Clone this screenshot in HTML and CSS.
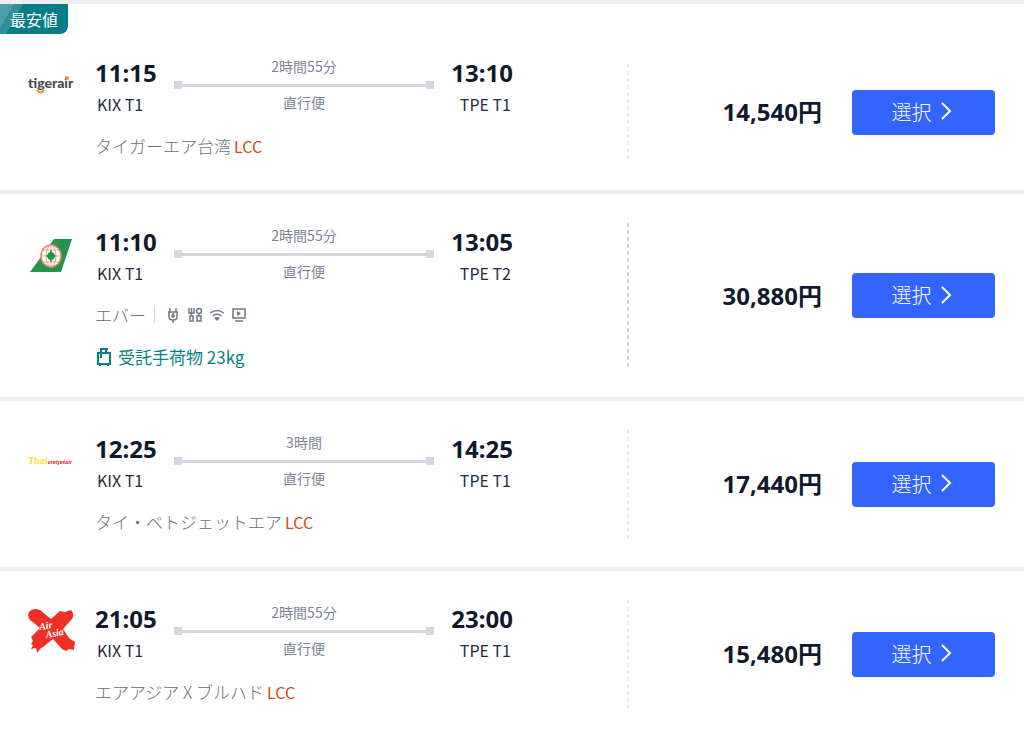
FILE: index.html
```html
<!DOCTYPE html>
<html lang="ja">
<head>
    <meta charset="UTF-8">
    <meta name="viewport" content="width=device-width, initial-scale=1.0">
    <title>航空券 検索結果</title>
    <link rel="stylesheet" href="styles.css">
</head>
<body>
    <ul class="flights">

        <!-- タイガーエア台湾 -->
        <li class="flight cheapest">
            <span class="badge">最安値</span>
            <div class="itinerary">
                <svg class="logo" viewBox="0 0 48 48" role="img" aria-label="tigerair">
                    <text x="0" y="27" class="tiger-text">tigerair</text>
                    <path d="M9 29q4 5 7 0" fill="none" stroke="#f39325" stroke-width="2"/>
                    <circle cx="39" cy="17" r="2" fill="#f39325"/>
                </svg>
                <div class="detail">
                    <div class="route">
                        <div class="stop">
                            <time class="time">11:15</time>
                            <span class="airport">KIX T1</span>
                        </div>
                        <div class="track">
                            <span>2時間55分</span>
                            <div class="line"></div>
                            <span>直行便</span>
                        </div>
                        <div class="stop arrival">
                            <time class="time">13:10</time>
                            <span class="airport">TPE T1</span>
                        </div>
                    </div>
                    <div class="airline">タイガーエア台湾 <span class="lcc">LCC</span></div>
                </div>
            </div>
            <div class="booking">
                <strong class="price">14,540円</strong>
                <button class="select" type="button">選択
                    <svg class="arrow" viewBox="0 0 12 18"><path d="M2 1l8 8-8 8"/></svg>
                </button>
            </div>
        </li>

        <!-- エバー -->
        <li class="flight">
            <div class="itinerary">
                <svg class="logo" viewBox="0 0 48 48" role="img" aria-label="EVA AIR">
                    <path d="M26 9h18L33 42H2z" fill="#239448"/>
                    <ellipse cx="23" cy="26" rx="10" ry="11" fill="#fff" stroke="#dc8a62" stroke-width="1.500"/>
                    <g fill="none" stroke="#e3a888" stroke-width="1">
                        <ellipse cx="23" cy="26" rx="5" ry="11"/>
                        <path d="M13 26h20M15 20h16M15 32h16M23 15v22"/>
                    </g>
                    <path d="M23 20l2 3 3 3-3 3-2 3-2-3-3-3 3-3z" fill="#239448"/>
                    <path d="M20 23h6v6h-6z" fill="#239448"/>
                </svg>
                <div class="detail">
                    <div class="route">
                        <div class="stop">
                            <time class="time">11:10</time>
                            <span class="airport">KIX T1</span>
                        </div>
                        <div class="track">
                            <span>2時間55分</span>
                            <div class="line"></div>
                            <span>直行便</span>
                        </div>
                        <div class="stop arrival">
                            <time class="time">13:05</time>
                            <span class="airport">TPE T2</span>
                        </div>
                    </div>
                    <div class="airline">エバー
                        <span class="amenities">
                            <!-- 電源 -->
                            <svg viewBox="0 0 16 16"><path d="M5 1v4M11 1v4M3 5h10M4 5v5q0 3 4 3t4-3V5M8 13v3"/><path d="M9 6l-2 3h2l-1 2"/></svg>
                            <!-- 機内食 -->
                            <svg viewBox="0 0 16 16"><path d="M2 1v5h5V1M4.500 1v8M3 9h3v5H3zM10 9h4v5h-4zM12 6v3"/><circle cx="12" cy="4" r="2.500"/></svg>
                            <!-- Wi-Fi -->
                            <svg viewBox="0 0 16 16"><path d="M1 6q7-5 14 0M3.500 9q4.500-3.500 9 0"/><path d="M5 11q3-2 6 0l-3 3z" class="solid"/></svg>
                            <!-- 映画 -->
                            <svg viewBox="0 0 16 16"><path d="M2 2h12v9H2zM4 14h8"/><path d="M6 4l4 2.500L6 9z" class="solid"/></svg>
                        </span>
                    </div>
                    <div class="baggage">
                        <svg viewBox="0 0 18 18"><path d="M3 5h12v11H3zM6 5V1h5v4M5 16v2M13 16v2M6 5v5"/><path d="M5 0h8v2H5z" class="solid"/></svg>
                        受託手荷物 23kg
                    </div>
                </div>
            </div>
            <div class="booking booking-dark">
                <strong class="price">30,880円</strong>
                <button class="select" type="button">選択
                    <svg class="arrow" viewBox="0 0 12 18"><path d="M2 1l8 8-8 8"/></svg>
                </button>
            </div>
        </li>

        <!-- タイ・ベトジェットエア -->
        <li class="flight">
            <div class="itinerary">
                <svg class="logo" viewBox="0 0 48 48" role="img" aria-label="Thai Vietjet">
                    <text x="0" y="27" class="thai-text">Thai<tspan class="vietjet-text">vietjetair</tspan></text>
                </svg>
                <div class="detail">
                    <div class="route">
                        <div class="stop">
                            <time class="time">12:25</time>
                            <span class="airport">KIX T1</span>
                        </div>
                        <div class="track">
                            <span>3時間</span>
                            <div class="line"></div>
                            <span>直行便</span>
                        </div>
                        <div class="stop arrival">
                            <time class="time">14:25</time>
                            <span class="airport">TPE T1</span>
                        </div>
                    </div>
                    <div class="airline">タイ・ベトジェットエア <span class="lcc">LCC</span></div>
                </div>
            </div>
            <div class="booking">
                <strong class="price">17,440円</strong>
                <button class="select" type="button">選択
                    <svg class="arrow" viewBox="0 0 12 18"><path d="M2 1l8 8-8 8"/></svg>
                </button>
            </div>
        </li>

        <!-- エアアジア X -->
        <li class="flight">
            <div class="itinerary">
                <svg class="logo" viewBox="0 0 48 48" role="img" aria-label="AirAsia X">
                    <path d="M1 5Q5 0 12 3l11 9L32 4l5 1 6-2q4 4 1 9L35 22l6 9 6 4-1 8-5-1-3 2-4-2-9-10-10 8-2 1-4 5-1-5-5 1 2-4-2-1 2-3-2-4 9-9L2 13Q-1 9 1 5z" fill="#ee3124"/>
                    <g class="airasia-text" transform="rotate(-10 24 24)">
                        <text x="12" y="21">Air</text>
                        <text x="17" y="30">Asia</text>
                    </g>
                </svg>
                <div class="detail">
                    <div class="route">
                        <div class="stop">
                            <time class="time">21:05</time>
                            <span class="airport">KIX T1</span>
                        </div>
                        <div class="track">
                            <span>2時間55分</span>
                            <div class="line"></div>
                            <span>直行便</span>
                        </div>
                        <div class="stop arrival">
                            <time class="time">23:00</time>
                            <span class="airport">TPE T1</span>
                        </div>
                    </div>
                    <div class="airline">エアアジア X ブルハド <span class="lcc">LCC</span></div>
                </div>
            </div>
            <div class="booking">
                <strong class="price">15,480円</strong>
                <button class="select" type="button">選択
                    <svg class="arrow" viewBox="0 0 12 18"><path d="M2 1l8 8-8 8"/></svg>
                </button>
            </div>
        </li>

    </ul>
</body>
</html>
```
FILE: styles.css
```css
* {
    box-sizing: border-box;
}

body {
    margin: 0;
    background-color: #fff;
    color: #111a2c;
    font-family: "Noto Sans CJK JP", sans-serif;
    font-size: 16px;
}

.flights {
    list-style: none;
    margin: 0;
    padding: 0;
}

.flight {
    position: relative;
    display: flex;
    padding: 29px 29px 29px 28px;
    border-top: 4px solid #ebedf1;
}

.flight:last-child {
    padding-bottom: 20px;
}

.cheapest {
    padding-top: 50px;
    padding-bottom: 28px;
}

.cheapest .booking {
    margin: 10px 0 2px;
}

.badge {
    position: absolute;
    top: 0;
    left: 0;
    padding: 0 10px;
    line-height: 30px;
    color: #fff;
    background: linear-gradient(120deg, #4ba0a6 0, #4ba0a6 12px, #2f9097 12px, #2f9097 20px, #057d86 20px);
    border-bottom-right-radius: 8px;
}

.itinerary {
    flex: 1;
    display: flex;
    gap: 19px;
    padding-right: 114px;
}

.logo {
    flex: none;
    width: 48px;
    height: 48px;
    margin-top: 7px;
}

.detail {
    flex: 1;
}

.route {
    display: flex;
    justify-content: space-between;
}

.stop {
    display: flex;
    flex-direction: column;
    width: 79px;
    padding-top: 4px;
}

.arrival {
    text-align: right;
}

.time {
    font-family: "Noto Sans", sans-serif;
    font-size: 24px;
    font-weight: 700;
    line-height: 30px;
}

.airport {
    padding: 0 2px;
    line-height: 32px;
    color: #1d2b45;
}

.track {
    flex: 1;
    text-align: center;
    font-size: 14px;
    line-height: 24px;
    color: #7b8494;
}

.track span {
    display: block;
}

/* 両端に四角が付いた区間の線 */
.line {
    display: flex;
    align-items: center;
    justify-content: space-between;
    height: 8px;
    margin: 3px 0 1px;
    background: linear-gradient(#d5d8e0, #d5d8e0) center / 100% 3px no-repeat;
}

.line::before,
.line::after {
    content: "";
    width: 8px;
    height: 8px;
    background-color: #d5d8e0;
}

.airline {
    display: flex;
    align-items: center;
    gap: 3px;
    margin-top: 10px;
    font-size: 17px;
    font-weight: 300;
    line-height: 32px;
    color: #667081;
}

.lcc {
    font-size: 16px;
    font-weight: 400;
    color: #d14a10;
}

.amenities {
    display: flex;
    gap: 6px;
    margin-left: 5px;
    padding-left: 10px;
    border-left: 1px solid #d5d8e0;
}

.amenities svg {
    width: 16px;
    height: 16px;
    fill: none;
    stroke: #6f7989;
    stroke-width: 1.5;
}

.baggage {
    display: flex;
    align-items: center;
    gap: 5px;
    margin-top: 15px;
    font-size: 17px;
    line-height: 22px;
    color: #0b7f88;
}

.baggage svg {
    width: 18px;
    height: 18px;
    fill: none;
    stroke: #0b7f88;
    stroke-width: 2;
}

.amenities .solid {
    fill: #6f7989;
    stroke: none;
}

.baggage .solid {
    fill: #0b7f88;
    stroke: none;
}

.booking {
    display: flex;
    align-items: center;
    justify-content: flex-end;
    gap: 30px;
    width: 368px;
    background: repeating-linear-gradient(#e8eaee 0, #e8eaee 4px, transparent 4px, transparent 7px) left / 2px 100% no-repeat;
}

.booking-dark {
    background-image: repeating-linear-gradient(#d0d3da 0, #d0d3da 4px, transparent 4px, transparent 7px);
}

.price {
    font-family: "Noto Sans", "Noto Sans CJK JP", sans-serif;
    font-size: 24px;
    font-weight: 700;
    line-height: 30px;
}

.select {
    display: flex;
    align-items: center;
    justify-content: center;
    gap: 8px;
    width: 143px;
    height: 45px;
    padding: 0 4px 2px 0;
    border: 0;
    border-radius: 4px;
    background-color: #3264ff;
    color: #fff;
    font-family: inherit;
    font-size: 20px;
    font-weight: 300;
    cursor: pointer;
}

.select:hover {
    background-color: #2453e6;
}

.arrow {
    width: 12px;
    height: 18px;
    fill: none;
    stroke: #fff;
    stroke-width: 2;
}

/* ロゴの文字 */
.tiger-text {
    font: 900 14px Lato, sans-serif;
    fill: #4c4c4e;
}

.thai-text {
    font: italic 700 10px "Liberation Serif", serif;
    fill: #f5e03a;
}

.vietjet-text {
    font: italic 700 6px "Liberation Sans", sans-serif;
    fill: #e32a2a;
}

.airasia-text {
    font: italic 700 10px "Liberation Serif", serif;
    fill: #fff;
}
```
